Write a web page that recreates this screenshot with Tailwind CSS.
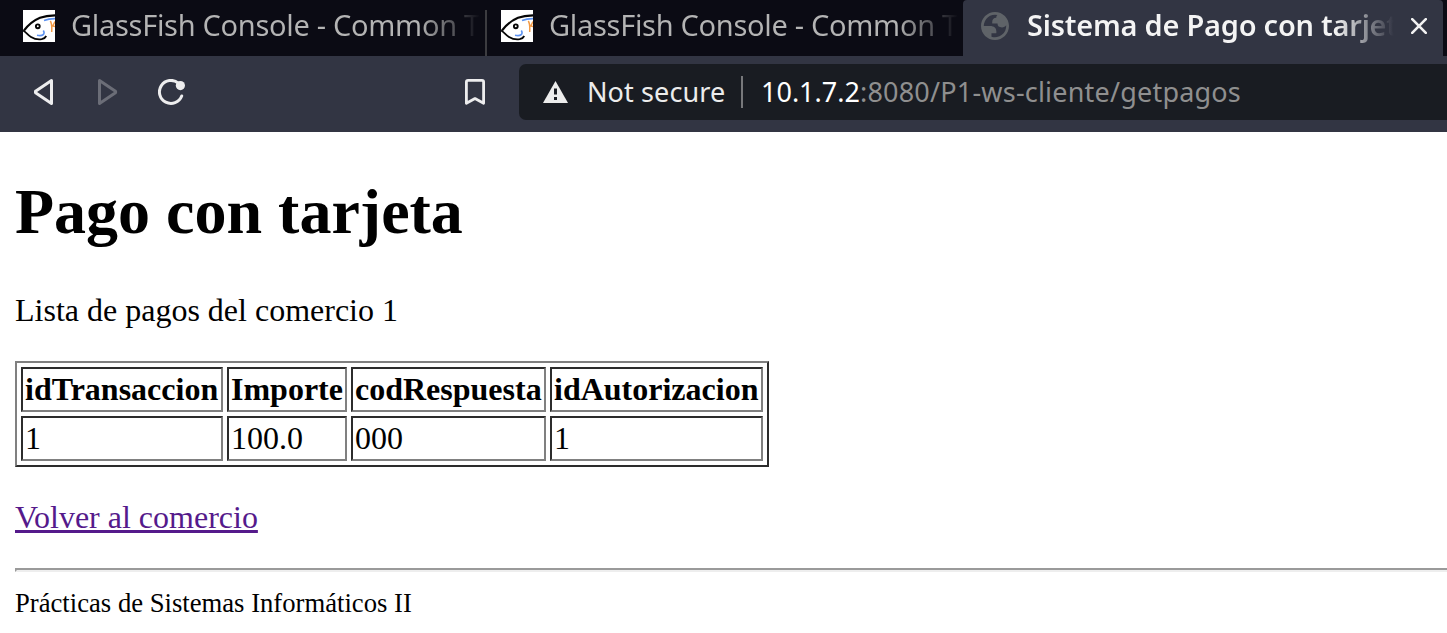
<!DOCTYPE html>
<html lang="es">
<head>
<meta charset="utf-8">
<title>Sistema de Pago con tarjeta</title>
<script src="https://cdn.jsdelivr.net/npm/@tailwindcss/browser@4"></script>
</head>
<body class="h-[633px] overflow-hidden bg-white text-black">
<svg class="hidden">
  <symbol id="fish" viewBox="0 0 32 32">
    <rect width="32" height="32" fill="#fff"/>
    <path d="M1 20.500C6 14 11 10.300 17 7.800C22 6 27 5.500 32 5.400" fill="none" stroke="#050505" stroke-width="2.100"/>
    <path d="M0 20.500C3 22 4.500 24.800 8 27C11 28.800 15 29.800 18.700 29.200C21 28.700 22.500 27.500 23.200 26" fill="none" stroke="#050505" stroke-width="1.800"/>
    <circle cx="14.800" cy="16.300" r="1.900" fill="none" stroke="#050505" stroke-width="1.900"/>
    <path d="M21 10.600C24.500 9.200 28 8.700 32 8.600M20.300 20.500C22.500 24.300 19.500 26.500 14 25.200" fill="none" stroke="#5b91f0" stroke-width="1.600"/>
    <path d="M27.300 11C29.300 14 28.800 18 28.700 22M32 11.500L29.800 16L32 16.500" fill="none" stroke="#f39a45" stroke-width="1.500"/>
  </symbol>
</svg>
<header class="flex h-[132px] flex-col bg-[#323543] font-['Noto_Sans','Open_Sans',sans-serif]">
  <div class="flex h-14 bg-[#0b0b14] text-[29px] leading-[50px] whitespace-nowrap">
    <div class="flex h-14 w-[485px] pl-[23px]">
      <svg class="mt-[10px] size-8 shrink-0"><use href="#fish"/></svg>
      <span class="ml-4 w-[409px] overflow-hidden bg-linear-to-r from-[#b4b4b4] from-85% to-transparent bg-clip-text tracking-[-0.3px] text-transparent">GlassFish Console - Common T</span>
    </div>
    <div class="mt-[10px] w-0.5 bg-[#3c3c40]"></div>
    <div class="flex h-14 w-[476px] pl-[14px]">
      <svg class="mt-[10px] size-8 shrink-0"><use href="#fish"/></svg>
      <span class="ml-4 w-[409px] overflow-hidden bg-linear-to-r from-[#b4b4b4] from-85% to-transparent bg-clip-text tracking-[-0.3px] text-transparent">GlassFish Console - Common T</span>
    </div>
    <div class="flex h-14 w-[480px] rounded-t-[4px] bg-[#323543] pl-[18px]">
      <svg class="mt-3 size-7 shrink-0" viewBox="2 2 20 20"><path fill="#5f6368" fill-rule="evenodd" d="M12 2C6.480 2 2 6.480 2 12s4.480 10 10 10 10-4.480 10-10S17.520 2 12 2zM4 12h4.400c3.407.022 4.922 1.730 4.543 5.127H9.488v2.470a8.004 8.004 0 0 0 10.498-8.083C19.327 12.504 18.332 13 17 13c-2.137 0-3.206-.916-3.206-2.750h-3.748c-.274-2.728.683-4.092 2.870-4.092 0-.975.327-1.597.811-1.970A8.004 8.004 0 0 0 4 12z"/></svg>
      <span class="ml-[18px] w-[367px] overflow-hidden bg-linear-to-r from-[#f4f4f4] from-84% to-transparent bg-clip-text font-semibold tracking-[-0.25px] text-transparent">Sistema de Pago con tarjet</span>
      <svg class="mt-[18px] ml-[17px] size-4 shrink-0" viewBox="0 0 16 16"><path d="M1.200 1.200L14.800 14.800M14.800 1.200L1.200 14.800" stroke="#f2f2f2" stroke-width="2.600" stroke-linecap="round"/></svg>
    </div>
  </div>
  <div class="flex h-[72px] items-center">
    <svg class="ml-[34px] h-[26px] w-5 shrink-0" viewBox="0 0 20 26"><path d="M17.500 1.500L1.900 11.900Q.700 13 1.900 14.100L17.500 24.500Z" fill="none" stroke="#ededee" stroke-width="3" stroke-linejoin="round"/></svg>
    <svg class="ml-11 h-[26px] w-5 shrink-0" viewBox="0 0 20 26"><path d="M1.500 1.500L17.100 11.900Q18.300 13 17.100 14.100L1.500 24.500Z" fill="none" stroke="#6b6d77" stroke-width="3" stroke-linejoin="round"/></svg>
    <svg class="ml-10 h-[26px] w-7 shrink-0" viewBox="0 0 28 26"><path d="M20.300 4.100A11.500 11.500 0 1 0 23.700 17" fill="none" stroke="#ededee" stroke-width="3" stroke-linecap="round"/><circle cx="22.400" cy="6.600" r="4.600" fill="#ededee"/></svg>
    <svg class="ml-[279px] h-[26px] w-5 shrink-0" viewBox="0 0 20 26"><path d="M3 1.400H17Q18.600 1.400 18.600 3V24.300L10 19.600L1.400 24.300V3Q1.400 1.400 3 1.400Z" fill="none" stroke="#ededee" stroke-width="2.800" stroke-linejoin="round"/></svg>
    <div class="ml-[34px] flex h-14 flex-1 items-center rounded-l-[7px] bg-[#191c22] text-[27px] whitespace-nowrap text-[#ececec]">
      <svg class="ml-6 h-[22px] w-[25px] shrink-0" viewBox="0 0 25 22"><path d="M12.500 0L25 22H0Z" fill="#ececec"/><path d="M11 7.500h3v6h-3zM11 16h3v3h-3z" fill="#191c22"/></svg>
      <span class="ml-[19px] w-[154px] tracking-[0.1px]">Not secure</span>
      <div class="h-8 w-0.5 bg-[#77787b]"></div>
      <span class="ml-[18px] w-[99px] text-white">10.1.7.2</span>
      <span class="tracking-[0.2px] text-[#8f8f8f]">:8080/P1-ws-cliente/getpagos</span>
    </div>
  </div>
</header>
<main class="pl-[15px] font-['Liberation_Serif',serif] text-[32px] leading-9">
  <h1 class="pt-[43px] text-[64px] leading-[74px] font-bold">Pago con tarjeta</h1>
  <p class="mt-[43px]">Lista de pagos del comercio 1</p>
  <table class="mt-[33px] w-[754px] table-fixed border-separate border-spacing-1 border-2 border-t-[#808080] border-r-[#2c2c2c] border-b-[#2c2c2c] border-l-[#808080] text-left">
    <colgroup><col class="w-[202px]"><col class="w-[120px]"><col class="w-[195px]"><col class="w-[213px]"></colgroup>
    <tr class="h-[45px] *:border-2 *:border-t-[#2c2c2c] *:border-r-[#808080] *:border-b-[#808080] *:border-l-[#2c2c2c] *:px-0.5 *:pt-0.5 *:pb-0 *:align-top">
      <th>idTransaccion</th><th>Importe</th><th>codRespuesta</th><th>idAutorizacion</th>
    </tr>
    <tr class="h-[45px] *:border-2 *:border-t-[#2c2c2c] *:border-r-[#808080] *:border-b-[#808080] *:border-l-[#2c2c2c] *:px-0.5 *:pt-0.5 *:pb-0 *:align-top">
      <td>1</td><td>100.0</td><td>000</td><td>1</td>
    </tr>
  </table>
  <p class="mt-8"><a href="#" class="text-[#551a8b] underline decoration-[3px] underline-offset-2">Volver al comercio</a></p>
  <div class="mt-[33px] h-1 border-y-2 border-l-2 border-t-[#9a9a9a] border-b-[#eeeeee] border-l-[#9a9a9a]"></div>
  <p class="mt-4 text-[26.667px] leading-[30px]">Prácticas de Sistemas Informáticos II</p>
</main>
</body>
</html>
